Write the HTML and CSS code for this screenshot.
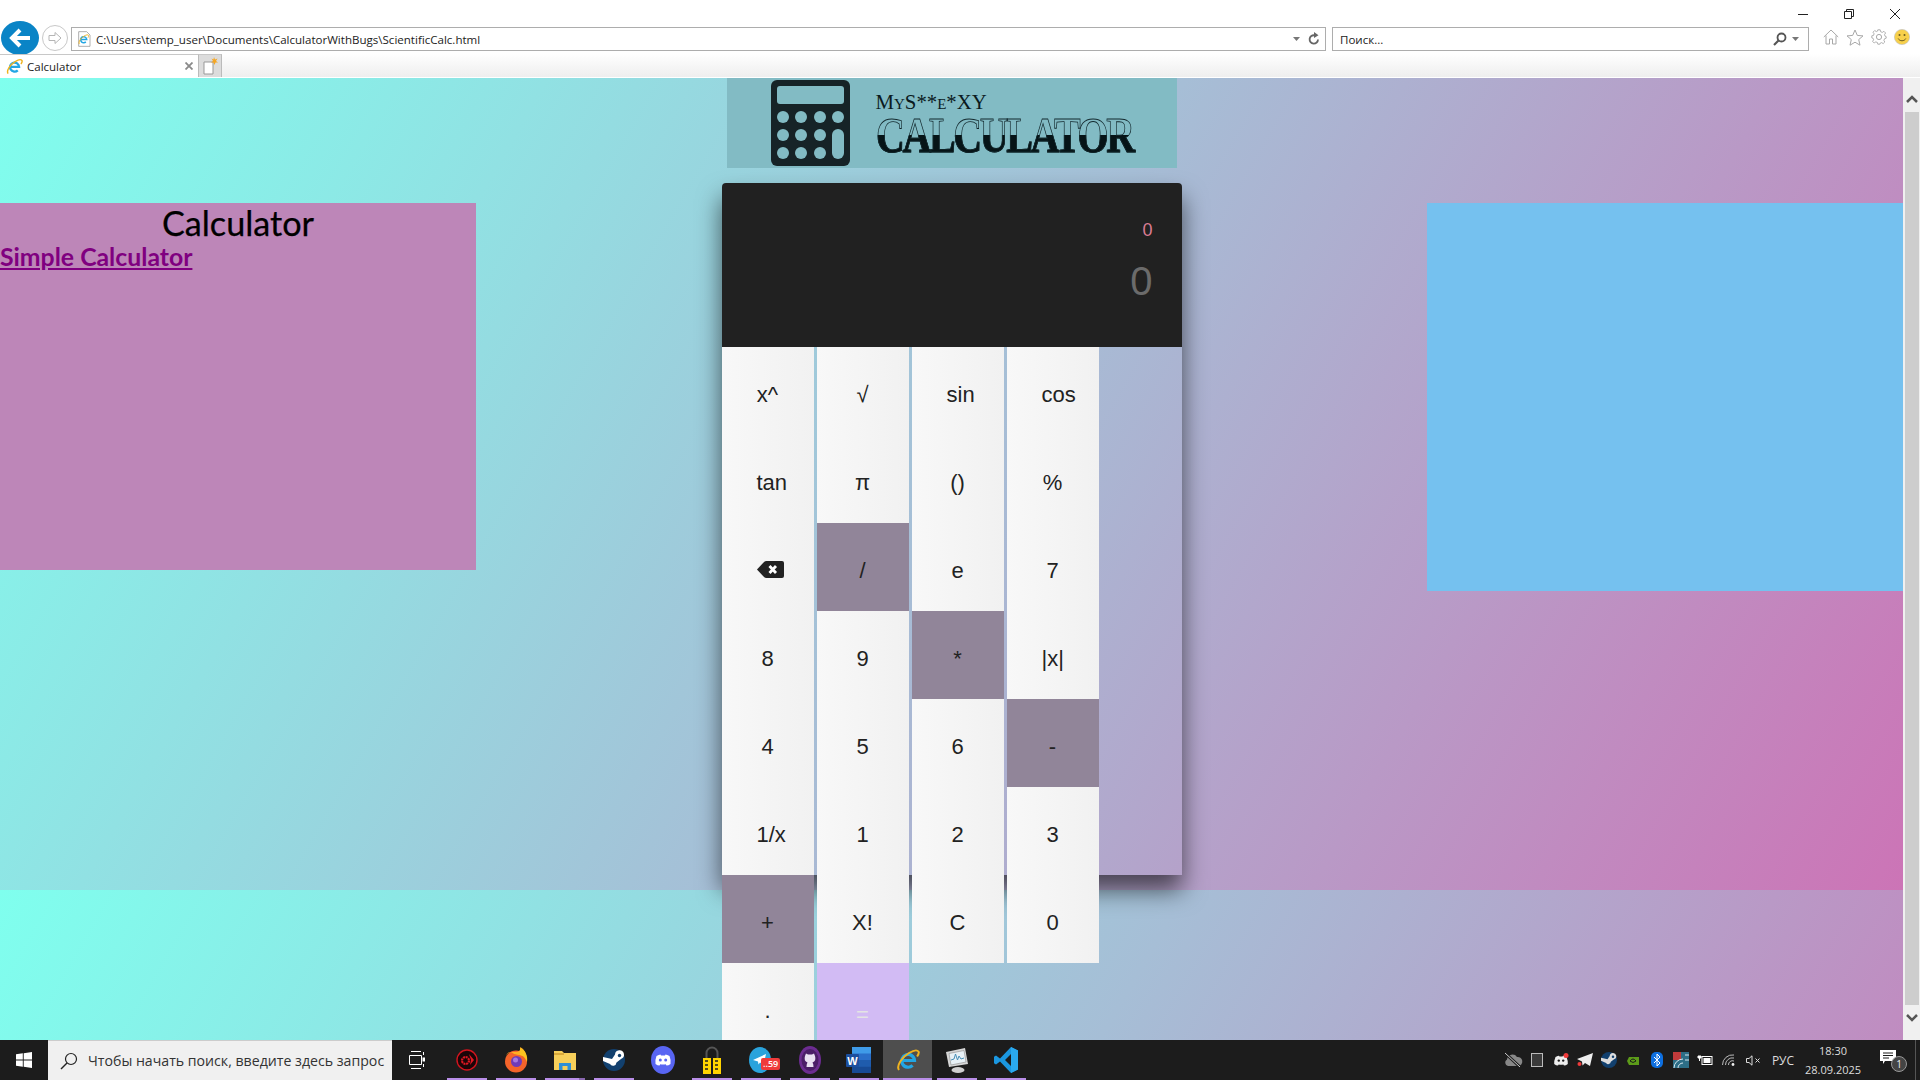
FILE: index.html
```html
<!DOCTYPE html>
<html lang="ru">
<head>
<meta charset="utf-8">
<title>Calculator</title>
<link rel="stylesheet" href="styles.css">
</head>
<body>
<svg class="defs" width="0" height="0" aria-hidden="true">
  <symbol id="ie" viewBox="0 0 24 24">
    <path d="M6 12.5H18.5A6.4 6.4 0 1 0 16.6 17.4" fill="none" stroke="#22a6e4" stroke-width="3.2"/>
    <path d="M3 22C0 18 6 9 13 5c4-2.400 8-3.400 9.500-1.500 .8 1.200-.3 3.400-1.400 5" fill="none" stroke="#efb320" stroke-width="2"/>
  </symbol>
</svg>
<div class="window">
  <header class="chrome">
    <div class="titlebar">
      <svg class="wc" width="12" height="12" viewBox="0 0 12 12"><path d="M1 6.500H11" stroke="#222" fill="none"/></svg>
      <svg class="wc" width="12" height="12" viewBox="0 0 12 12"><path d="M1.500 3.500H8.500V10.500H1.500ZM3.500 3.500V1.500H10.500V8.500H8.500" stroke="#222" fill="none"/></svg>
      <svg class="wc" width="12" height="12" viewBox="0 0 12 12"><path d="M1 1L11 11M11 1L1 11" stroke="#222" fill="none"/></svg>
    </div>
    <div class="navbar">
      <button class="back"><svg width="24" height="20" viewBox="0 0 24 20"><path d="M12 2L4 10L12 18M4 10H22" fill="none" stroke="#fff" stroke-width="4"/></svg></button>
      <button class="forward"><svg width="16" height="14" viewBox="0 0 16 14"><path d="M8 1.500L14 7L8 12.500V9.500H2V4.500H8Z" fill="none" stroke="#b5b5b5"/></svg></button>
      <div class="field address">
        <svg class="fav" width="16" height="16" viewBox="0 0 24 24"><path d="M4 1H16L21 6V23H4Z" fill="#fff" stroke="#888"/><use href="#ie" x="3" y="4" width="17" height="17"/></svg>
        <span class="url">C:\Users\temp_user\Documents\CalculatorWithBugs\ScientificCalc.html</span>
        <svg class="caret" width="7" height="4" viewBox="0 0 7 4"><path d="M0 0H7L3.500 4Z" fill="#777"/></svg>
        <svg class="refresh" width="12" height="14" viewBox="0 0 12 14"><path d="M10 7.500A4.200 4.200 0 1 1 6.500 3.300" fill="none" stroke="#666" stroke-width="1.800"/><path d="M6 0L10.500 3.300L6 6Z" fill="#666"/></svg>
      </div>
      <div class="field search">
        <span class="url">Поиск...</span>
        <svg class="glass" width="14" height="14" viewBox="0 0 14 14"><circle cx="8.500" cy="5.500" r="4" fill="none" stroke="#555" stroke-width="1.800"/><path d="M5.500 8.500L1 13" stroke="#555" stroke-width="2.200"/></svg>
        <svg class="caret" width="7" height="4" viewBox="0 0 7 4"><path d="M0 0H7L3.500 4Z" fill="#777"/></svg>
      </div>
      <div class="tools">
        <svg width="16" height="16" viewBox="0 0 16 16"><path d="M.8 8L8 1L15.200 8M3 6.500V15H6.500V10H9.500V15H13V6.500" fill="none" stroke="#a8a8a8"/></svg>
        <svg width="18" height="17" viewBox="0 0 18 17"><path d="M9 1L11.300 6.400L17 6.900L12.700 10.600L14 16.200L9 13.200L4 16.200L5.300 10.600L1 6.900L6.700 6.400Z" fill="none" stroke="#a8a8a8"/></svg>
        <svg width="16" height="16" viewBox="0 0 16 16"><circle cx="8" cy="8" r="2.600" fill="none" stroke="#a8a8a8"/><path d="M6.800 .8H9.200L9.600 2.700L11.300 3.400L12.900 2.300L14.600 4L13.500 5.600L14.200 7.300L15.200 7.600V9.200L13.600 9.700L12.900 11.400L13.800 13L12.200 14.600L10.600 13.600L9.200 14.200L8.900 15.200H6.800L6.400 13.500L4.800 12.900L3.200 14L1.600 12.400L2.600 10.800L2 9.200L.8 8.900V6.800L2.500 6.400L3.100 4.800L2 3.200L3.700 1.500L5.300 2.600L6.500 2.100Z" fill="none" stroke="#a8a8a8" stroke-width=".9"/></svg>
        <svg width="16" height="16" viewBox="0 0 16 16"><circle cx="8" cy="8" r="7.600" fill="#f7d04b" stroke="#bdbdbd" stroke-width=".6"/><circle cx="5.500" cy="6" r="1" fill="#6b5a20"/><circle cx="10.500" cy="6" r="1" fill="#6b5a20"/><path d="M4.200 9.500C5.500 12.500 10.500 12.500 11.800 9.500" fill="none" stroke="#6b5a20"/></svg>
      </div>
    </div>
    <div class="tabbar">
      <div class="tab">
        <svg width="17" height="17"><use href="#ie" width="17" height="17"/></svg>
        <span class="tab-title">Calculator</span>
        <svg class="tab-close" width="8" height="8" viewBox="0 0 8 8"><path d="M.5 .5L7.500 7.500M7.500 .5L.5 7.500" stroke="#8a8a8a" stroke-width="1.800"/></svg>
      </div>
      <div class="newtab"><svg width="16" height="18" viewBox="0 0 16 18"><path d="M2 5H11V17H2Z" fill="#fff" stroke="#999"/><path d="M12 0L13 2.500L15.500 1.500L14 4L16 5.500L13.500 5.500L12.500 8L11.500 5.500L9 5.500L11 4L9.500 1.500L11.500 2.500Z" fill="#f5a623"/></svg></div>
    </div>
  </header>

  <div class="viewport">
    <main class="page">
      <section class="panel panel-left">
        <h2 class="panel-title">Calculator</h2>
        <a class="panel-link" href="#">Simple Calculator</a>
      </section>
      <section class="center">
        <div class="logo">
          <svg class="logo-icon" width="79" height="86" viewBox="0 0 79 86">
            <rect width="79" height="86" rx="6" fill="#162327"/>
            <rect x="6" y="6" width="67" height="18" rx="3" fill="#82bbc4"/>
            <g fill="#82bbc4">
              <circle cx="12" cy="37" r="6"/><circle cx="30" cy="37" r="6"/><circle cx="49" cy="37" r="6"/><circle cx="67" cy="37" r="6"/>
              <circle cx="12" cy="55" r="6"/><circle cx="30" cy="55" r="6"/><circle cx="49" cy="55" r="6"/>
              <circle cx="12" cy="73" r="6"/><circle cx="30" cy="73" r="6"/><circle cx="49" cy="73" r="6"/>
              <rect x="61" y="49" width="12" height="30" rx="6"/>
            </g>
          </svg>
          <div class="logo-text">
            <div class="logo-top">MyS**e*XY</div>
            <div class="logo-main">CALCULATOR</div>
          </div>
        </div>
        <div class="calc">
          <div class="display">
            <div class="expr">0</div>
            <div class="result">0</div>
          </div>
          <div class="keys">
            <button class="key"><span>x^</span></button>
            <button class="key"><span>√</span></button>
            <button class="key"><span>sin</span></button>
            <button class="key"><span>cos</span></button>
            <button class="key"><span>tan</span></button>
            <button class="key"><span>π</span></button>
            <button class="key"><span>()</span></button>
            <button class="key"><span>%</span></button>
            <button class="key"><span><svg class="bksp" width="27" height="17" viewBox="0 0 27 17"><path d="M0 8.500L7 1Q8 0 9.500 0H25Q27 0 27 2V15Q27 17 25 17H9.500Q8 17 7 16Z" fill="#222"/><path d="M12.500 5L19 12M19 5L12.500 12" stroke="#fff" stroke-width="2.800"/></svg></span></button>
            <button class="key key-op"><span>/</span></button>
            <button class="key"><span>e</span></button>
            <button class="key"><span>7</span></button>
            <button class="key"><span>8</span></button>
            <button class="key"><span>9</span></button>
            <button class="key key-op"><span>*</span></button>
            <button class="key"><span>|x|</span></button>
            <button class="key"><span>4</span></button>
            <button class="key"><span>5</span></button>
            <button class="key"><span>6</span></button>
            <button class="key key-op"><span>-</span></button>
            <button class="key"><span>1/x</span></button>
            <button class="key"><span>1</span></button>
            <button class="key"><span>2</span></button>
            <button class="key"><span>3</span></button>
            <button class="key key-op"><span>+</span></button>
            <button class="key"><span>X!</span></button>
            <button class="key"><span>C</span></button>
            <button class="key"><span>0</span></button>
            <button class="key"><span>.</span></button>
            <button class="key key-eq"><span>=</span></button>
          </div>
        </div>
      </section>
      <section class="panel panel-right"></section>
    </main>
    <aside class="scrollbar">
      <svg class="sb-arrow" width="12" height="8" viewBox="0 0 12 8"><path d="M1 7L6 2L11 7" fill="none" stroke="#555" stroke-width="2.500"/></svg>
      <div class="sb-thumb"></div>
      <svg class="sb-arrow" width="12" height="8" viewBox="0 0 12 8"><path d="M1 1L6 6L11 1" fill="none" stroke="#555" stroke-width="2.500"/></svg>
    </aside>
  </div>

  <footer class="taskbar">
    <div class="start"><svg width="16" height="16" viewBox="0 0 16 16"><path d="M0 2.300L6.800 1.300V7.500H0ZM7.700 1.200L16 0V7.500H7.700ZM0 8.400H6.800V14.700L0 13.700ZM7.700 8.400H16V16L7.700 14.800Z" fill="#fff"/></svg></div>
    <div class="tb-search">
      <svg width="18" height="18" viewBox="0 0 18 18"><circle cx="11" cy="7" r="5.500" fill="none" stroke="#222" stroke-width="1.200"/><path d="M7 11L1 17" stroke="#222" stroke-width="1.400"/></svg>
      <span class="tb-search-text">Чтобы начать поиск, введите здесь запрос</span>
    </div>
    <div class="slot slot-view"><svg width="16" height="18" viewBox="0 0 16 18"><path d="M2 .5H12M2 17.500H12M.5 4.500H12.500V13.500H.5Z" fill="none" stroke="#fff"/><rect x="13.500" y="6.500" width="2.500" height="4" fill="#fff"/><path d="M14.500 1V4M14.500 13V16" stroke="#fff"/></svg></div>

    <div class="slot on"><svg width="22" height="22" viewBox="0 0 22 22"><circle cx="11" cy="11" r="10" fill="#1b0508" stroke="#d3141e" stroke-width="1.400"/><circle cx="9.500" cy="11.500" r="3.500" fill="none" stroke="#e01822" stroke-width="2.200" stroke-dasharray="2 .7"/><path d="M13 5L18 11L14 16L15 11Z" fill="#e01822"/></svg></div>
    <div class="slot on"><svg width="24" height="26" viewBox="0 0 24 26"><circle cx="12" cy="14.500" r="11" fill="#f4642a"/><path d="M2 9C4 3 8 5 10 7C14 8 20 8 22 11C23 6 20 2 16 0C17 3 15 5 12 5C8 5 4 4 2 9Z" fill="#ffb020"/><path d="M16 1C22 4 24 9 23 15C21 11 20 9 16 8Z" fill="#fcc31f"/><circle cx="12.500" cy="14.500" r="5.500" fill="#6f3bb8"/><circle cx="11.500" cy="13" r="2.500" fill="#a678e0"/></svg></div>
    <div class="slot on double"><svg width="22" height="20" viewBox="0 0 22 20"><path d="M0 1H8L10 3H22V20H0Z" fill="#f6cf5a"/><path d="M0 3H10V5H0Z" fill="#d9a93a"/><path d="M5 20V13H17V20H13.500V16H8.500V20Z" fill="#2e8fd6"/></svg></div>
    <div class="slot on"><svg width="22" height="22" viewBox="0 0 22 22"><circle cx="11" cy="11" r="11" fill="#12406e"/><path d="M0 8V12L7 15A3.500 3.500 0 0 0 13.500 13.500L18 10A4.500 4.500 0 1 0 12 5.500L9 10Z" fill="#fff"/><circle cx="16.500" cy="6.500" r="1.700" fill="#12406e"/></svg></div>

    <div class="slot"><svg width="24" height="28" viewBox="0 0 24 28"><ellipse cx="12" cy="14" rx="12" ry="14" fill="#5865f2"/><path d="M5.500 10Q8 8.500 9.500 8.500L10 9.500H14L14.500 8.500Q16 8.500 18.500 10Q20 13.500 19.500 18Q17.500 19.500 15.500 19.500L14.700 18.200Q12 19 9.300 18.200L8.500 19.500Q6.500 19.500 4.500 18Q4 13.500 5.500 10Z" fill="#fff"/><circle cx="9.300" cy="14" r="1.500" fill="#5865f2"/><circle cx="14.700" cy="14" r="1.500" fill="#5865f2"/></svg></div>
    <div class="slot on"><svg width="18" height="28" viewBox="0 0 18 28"><path d="M3.500 13V7A5.500 5.500 0 0 1 14.500 7V13" fill="none" stroke="#555" stroke-width="2"/><rect y="12" width="8" height="16" fill="#ffd400"/><rect x="10" y="12" width="8" height="16" fill="#ffd400"/><path d="M2 15H5M2 19H5M2 23H5M12 15H15M12 19H15M12 23H15" stroke="#222" stroke-width="1.500"/></svg></div>
    <div class="slot on tg">
      <svg width="24" height="28" viewBox="0 0 24 28"><ellipse cx="11" cy="14" rx="11" ry="13" fill="#2aa3dc"/><path d="M4 14L17 8L14.500 19L11 16.500L9.500 18.500L9 15.500Z" fill="#fff"/></svg>
      <span class="badge">..59</span>
    </div>
    <div class="slot on"><svg width="22" height="28" viewBox="0 0 22 28"><ellipse cx="11" cy="14" rx="11" ry="14" fill="#6c2c91"/><ellipse cx="11" cy="14" rx="8.500" ry="11" fill="#4b1d68"/><path d="M6 10L7 7.500L9 8.500H13L15 7.500L16 10Q17.500 15 13.500 16.500Q14.500 17.500 14.500 21H7.500Q7.500 17.500 8.500 16.500Q4.500 15 6 10Z" fill="#e9dff2"/></svg></div>
    <div class="slot on"><svg width="25" height="26" viewBox="0 0 25 26"><rect x="6" y="0" width="19" height="26" rx="1.500" fill="#2a6fc9"/><rect x="6" y="0" width="19" height="6.500" fill="#3f9be8"/><rect x="6" y="13" width="19" height="6.500" fill="#1f5cad"/><rect x="6" y="19.500" width="19" height="6.500" fill="#174a94"/><rect x="0" y="7" width="13" height="13" rx="1" fill="#1c4f9e"/><text class="word-w" x="6.500" y="17.500">W</text></svg></div>
    <div class="slot active"><svg width="24" height="26" viewBox="0 0 24 24"><use href="#ie" width="24" height="24"/></svg></div>
    <div class="slot on"><svg width="24" height="26" viewBox="0 0 24 26"><path d="M1 5L20 1L23 17L4 20Z" fill="#d6d6d6"/><path d="M4 6.500L19 3.500L21 15L6 18Z" fill="#e8f1f6" stroke="#8b8b8b" stroke-width=".6"/><path d="M6 13L9 12L10.500 7L12.500 13L14 9L16 12L19 11" fill="none" stroke="#4a90b8"/><ellipse cx="13" cy="23" rx="6.500" ry="3" fill="#cfcfcf"/></svg></div>
    <div class="slot on"><svg width="24" height="28" viewBox="0 0 24 28"><path d="M17 1L24 4.500V23.500L17 27L6 15.500L2 18.500L0 17.300V10.700L2 9.500L6 12.500ZM17 8L11 14L17 20Z" fill="#1b97e0"/><path d="M17 1L24 4.500V23.500L17 27Z" fill="#2aa9ee"/></svg></div>

    <div class="tray">
      <span class="ti"><svg width="20" height="16" viewBox="0 0 20 16"><path d="M5 14A3.500 3.500 0 0 1 4 7.500A5.500 5.500 0 0 1 14 5A4.500 4.500 0 0 1 15.500 14Z" fill="#888"/><path d="M2 1L17 15" stroke="#1c1c1c" stroke-width="3"/><path d="M2 1L17 15" stroke="#ccc" stroke-width="1"/></svg></span>
      <span class="ti"><svg width="12" height="14" viewBox="0 0 12 14"><rect x=".5" y=".5" width="11" height="13" fill="#3a3a3a" stroke="#bbb"/></svg></span>
      <span class="ti"><svg width="16" height="14" viewBox="0 0 16 14"><path d="M2.500 4Q5 2.800 6 2.800L6.500 3.600H9.500L10 2.800Q11 2.800 13.500 4Q15 7.500 14.800 11Q13 12.500 11 12.500L10.300 11.400Q8 12 5.700 11.400L5 12.500Q3 12.500 1.200 11Q1 7.500 2.500 4Z" fill="#eee"/><circle cx="5.800" cy="7.600" r="1.200" fill="#1c1c1c"/><circle cx="10.200" cy="7.600" r="1.200" fill="#1c1c1c"/><circle cx="13" cy="2.500" r="2.500" fill="#ef3a3a"/></svg></span>
      <span class="ti"><svg width="16" height="14" viewBox="0 0 16 14"><path d="M0 6L16 0L13 13L8 10L5.500 12.500L5 8.500Z" fill="#eee"/><circle cx="2.500" cy="11" r="2" fill="#ef3a3a"/></svg></span>
      <span class="ti"><svg width="16" height="16" viewBox="0 0 22 22"><circle cx="11" cy="11" r="11" fill="#12406e"/><path d="M0 8V12L7 15A3.500 3.500 0 0 0 13.500 13.500L18 10A4.500 4.500 0 1 0 12 5.500L9 10Z" fill="#ddd"/><circle cx="16.500" cy="6.500" r="1.700" fill="#12406e"/></svg></span>
      <span class="ti"><svg width="12" height="9" viewBox="0 0 12 9"><path d="M2 1H12V9H2L0 5Z" fill="#5c9b19"/><path d="M3 5Q6 1 9 5Q6 8 3 5Z" fill="none" stroke="#1c1c1c"/></svg></span>
      <span class="ti"><svg width="12" height="16" viewBox="0 0 12 16"><rect width="12" height="16" rx="5" fill="#0d6fe0"/><path d="M3 5L9 11L6 14V2L9 5L3 11" fill="none" stroke="#fff"/></svg></span>
      <span class="ti"><svg width="16" height="16" viewBox="0 0 16 16"><rect width="16" height="16" fill="#2d6e86"/><rect width="8" height="8" fill="#c23b3b"/><path d="M1 16A9 9 0 0 1 10 7M5 16A5 5 0 0 1 10 11M12 3H16M12 8H16" fill="none" stroke="#d6e6ee"/></svg></span>
      <span class="ti"><svg width="16" height="11" viewBox="0 0 16 11"><path d="M1 1V3H4V1ZM2.500 3V6" fill="#fff" stroke="#fff"/><rect x="5" y="1.500" width="10" height="8" fill="none" stroke="#fff"/><rect x="6.500" y="3" width="7" height="5" fill="#fff"/></svg></span>
      <span class="ti"><svg width="14" height="12" viewBox="0 0 14 12"><path d="M.5 11A10 10 0 0 1 12 1M3.500 11A7 7 0 0 1 12 4M6.500 11A4 4 0 0 1 12 7" fill="none" stroke="#bbb"/><circle cx="11" cy="10.500" r="1.400" fill="#eee"/></svg></span>
      <span class="ti"><svg width="15" height="11" viewBox="0 0 15 11"><path d="M.5 3.500H3L6 .8V10.200L3 7.500H.5Z" fill="none" stroke="#ddd"/><path d="M9.500 3.500L13.500 7.500M13.500 3.500L9.500 7.500" stroke="#ddd"/></svg></span>
      <span class="lang">РУС</span>
      <div class="clock"><span>18:30</span><span>28.09.2025</span></div>
      <div class="notify">
        <svg width="16" height="15" viewBox="0 0 16 15"><path d="M0 0H16V11H5L3 14V11H0Z" fill="#fff"/><path d="M3 3H13M3 5.500H13M3 8H9" stroke="#1c1c1c"/></svg>
        <span class="notify-count">1</span>
      </div>
      <div class="desk"></div>
    </div>
  </footer>
</div>
</body>
</html>
```

FILE: styles.css
```css
* { box-sizing: border-box; }
html, body { margin: 0; padding: 0; height: 100%; overflow: hidden; }
body { font-family: "Open Sans", "Noto Sans", sans-serif; }
.defs { position: absolute; }
.window { width: 1920px; height: 1080px; display: flex; flex-direction: column; overflow: hidden; }

/* browser chrome */
.chrome { height: 78px; background: #fff; flex: none; display: flex; flex-direction: column; }
.titlebar { height: 20px; display: flex; justify-content: flex-end; align-items: flex-end; padding-right: 19px; gap: 34px; }
.wc { display: block; }
.navbar { height: 34px; display: flex; align-items: center; padding-left: 1px; }
.back { width: 38px; height: 34px; margin-top: 2px; border: 0; border-radius: 50%; background: #0a84c6; padding: 0; display: flex; align-items: center; justify-content: center; flex: none; }
.forward { width: 26px; height: 26px; margin-top: 2px; margin-left: 3px; border: 1px solid #c8c8c8; border-radius: 50%; background: #fff; padding: 0; display: flex; align-items: center; justify-content: center; flex: none; }
.field { height: 24px; margin-top: 4px; border: 1px solid #adadad; display: flex; align-items: center; background: #fff; flex: none; }
.address { width: 1255px; margin-left: 3px; padding-left: 4px; }
.search { width: 477px; margin-left: 6px; padding-left: 7px; }
.fav { flex: none; margin-right: 4px; }
.url { font-size: 11.550px; color: #222; white-space: nowrap; flex: 1; }
.caret { flex: none; }
.address .refresh { margin: 0 5px 0 8px; flex: none; }
.glass { flex: none; margin-right: 5px; }
.search .caret { margin-right: 9px; }
.tools { display: flex; align-items: center; gap: 7px; margin-left: 14px; }
.tabbar { height: 24px; border-bottom: 1px solid #fff; display: flex; background: linear-gradient(#fff, #eee); }
.tab { width: 199px; background: #fff; display: flex; align-items: center; padding-left: 6px; border-top: 1px solid #c8c8c8; border-right: 1px solid #bbb; }
.tab-title { font-size: 11.500px; color: #222; margin-left: 4px; flex: 1; }
.tab-close { margin-right: 5px; }
.newtab { width: 23px; background: #dcdcdc; display: flex; align-items: flex-end; justify-content: center; border-top: 1px solid #c8c8c8; border-right: 1px solid #bbb; padding-bottom: 2px; }

/* page */
.viewport { height: 962px; flex: none; display: flex; }
.page { width: 1903px; height: 962px; flex: none; overflow: hidden; display: grid; grid-template-columns: 476px 951px 476px; align-items: start;
  background: linear-gradient(120deg, #7fffee 0%, #a6bed6 50%, #cc74b6 100%) 0 0 / 100% 812px repeat; }
.panel { margin-top: 125px; }
.panel-left { height: 367px; background: #bd86b8; font-family: Lato, "Open Sans", sans-serif; display: flex; flex-direction: column; }
.panel-right { height: 388px; background: #75c1ef; }
.panel-title { margin: 0; font-size: 34.200px; font-weight: 400; line-height: 39px; color: #000; text-align: center; -webkit-text-stroke: .25px #000; }
.panel-link { font-size: 24.800px; font-weight: 700; line-height: 29px; color: #800080; }

.center { display: flex; flex-direction: column; align-items: center; }
.logo { width: 450px; height: 90px; background: #82bbc4; display: flex; flex: none; padding-left: 44px; padding-top: 2px; }
.logo-icon { flex: none; }
.logo-text { margin-left: 26px; width: 260px; font-family: "Liberation Serif", serif; color: #0a1a1e; }
.logo-top { font-size: 20.800px; line-height: 24px; margin-top: 10px; font-variant: small-caps; white-space: nowrap; }
.logo-main { font-size: 50px; line-height: 40px; font-weight: 700; letter-spacing: -3px; white-space: nowrap; width: 325px; color: transparent; -webkit-text-stroke: .8px #10252a; background: linear-gradient(transparent 50%, #061417 50%); -webkit-background-clip: text; background-clip: text; transform: scaleX(.8); transform-origin: left top; margin-top: 1px; }

.calc { width: 460px; height: 692px; margin-top: 15px; flex: none; border-radius: 4px 4px 0 0; box-shadow: 0 15px 25px rgba(0, 0, 0, .6); }
.display { height: 164px; background: #212121; border-radius: 4px 4px 0 0; padding: 36px 29px 0 0; text-align: right; font-family: "Liberation Sans", Arial, sans-serif; }
.expr { font-size: 18px; line-height: 22px; color: #d97b93; }
.result { font-size: 40px; line-height: 46px; margin-top: 17px; color: #6b6b6b; }
.keys { display: grid; grid-template-columns: repeat(4, 92px); grid-auto-rows: 88px; column-gap: 3px; }
.key { border: 0; padding: 8px 0 0; margin: 0; background: linear-gradient(90deg, #f8f8f8, #f1f1f1); font-family: "Liberation Sans", Arial, sans-serif; font-size: 22px; color: #222; display: flex; align-items: center; justify-content: center; }
.key span { display: block; width: 22px; text-align: center; white-space: nowrap; }
.key-op { background: #918599; }
.key-eq { background: #d2bbf4; color: #e4e4e4; padding-top: 16px; }
.bksp { display: block; margin-top: -3px; }

/* scrollbar */
.scrollbar { width: 17px; flex: none; background: #f0f0f0; display: flex; flex-direction: column; align-items: center; padding: 17px 0 18px; }
.sb-arrow { flex: none; }
.sb-thumb { flex: 1; width: 14px; margin: 9px 0; background: #cdcdcd; }

/* taskbar */
.taskbar { height: 40px; flex: none; background: #1c1c1c; display: flex; align-items: stretch; color: #ddd; }
.start { width: 48px; display: flex; align-items: center; justify-content: center; }
.tb-search { width: 344px; background: #f0f0f0; border-top: 1px solid #ccc; display: flex; align-items: center; padding-left: 12px; gap: 10px; color: #333; }
.tb-search-text { font-size: 14.150px; white-space: nowrap; }
.slot { width: 49px; flex: none; display: flex; align-items: center; justify-content: center; position: relative; }
.slot-view { width: 50px; }
.slot.on::after { content: ""; position: absolute; left: 5px; right: 4px; bottom: 0; height: 2px; background: #b98ee8; }
.slot.active { background: #4e4e4e; }
.slot.active::after { content: ""; position: absolute; left: 0; right: 0; bottom: 0; height: 2px; background: #b98ee8; }
.slot.double::before { content: ""; position: absolute; right: 4px; bottom: 0; width: 6px; height: 2px; background: #8a68b0; z-index: 1; }
.badge { position: absolute; left: 25px; top: 18px; background: #ef3b3b; color: #fff; font-size: 9px; line-height: 12px; padding: 0 2px; border-radius: 2px; font-weight: 600; }
.word-w { font-family: "Liberation Sans", sans-serif; font-weight: 700; font-size: 11px; fill: #fff; text-anchor: middle; }
.tray { margin-left: auto; display: flex; align-items: center; }
.ti { width: 24px; display: flex; align-items: center; justify-content: center; flex: none; }
.lang { width: 36px; text-align: center; font-size: 12px; flex: none; }
.clock { width: 64px; flex: none; display: flex; flex-direction: column; align-items: center; font-size: 11px; line-height: 19px; }
.notify { width: 45px; flex: none; display: flex; justify-content: center; position: relative; align-self: center; height: 24px; align-items: flex-start; padding-top: 2px; }
.notify-count { position: absolute; left: 26px; top: 8px; width: 16px; height: 16px; border-radius: 50%; background: #444; border: 1px solid #999; color: #eee; font-size: 10px; line-height: 14px; text-align: center; }
.desk { width: 5px; height: 40px; flex: none; margin-left: 5px; border-left: 1px solid #555; }
```
